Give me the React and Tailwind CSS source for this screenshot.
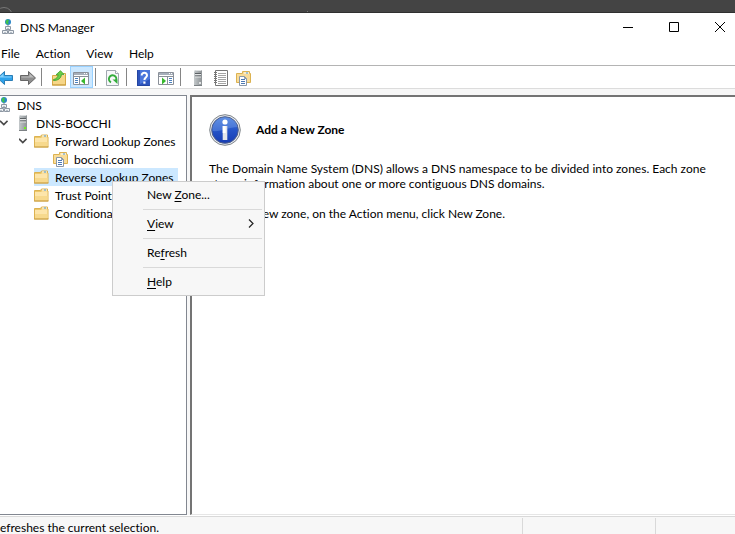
import React from "react";

function DnsIcon() {
  return (
    <svg width="16" height="16" viewBox="0 0 16 16" aria-hidden="true" className="shrink-0">
      <circle cx="8" cy="3" r="3" fill="#2a86c8" />
      <path d="M6 1.500 8 .3l1 1.500L8 3.200l.8 1.800L7.200 5.500 5.600 3.400z" fill="#3fc24a" />
      <path d="M8 6v2" stroke="#7b8794" />
      <g fill="#eef1f4" stroke="#8e98a4">
        <path d="M5.500 7.500h5v3h-5zM2.500 11.500h5v3h-5zM8.500 11.500h5v3h-5z" />
      </g>
      <path d="M7 9.500h2M4 13.500h2M10 13.500h2" stroke="#b4bdc6" />
    </svg>
  );
}

function ServerIcon({ power = false }) {
  return (
    <svg width="16" height="16" viewBox="0 0 16 16" aria-hidden="true" className="shrink-0">
      <defs>
        <linearGradient id="server-body" x1="0" y1="0" x2="1" y2="0">
          <stop offset="0" stopColor="#c3c8ca" />
          <stop offset="1" stopColor="#8d9295" />
        </linearGradient>
      </defs>
      <path d="M4 1.500 5 0h7v15l-1 1H4z" fill="url(#server-body)" />
      <path d="M4.500 1.500 5.500.5h6" fill="none" stroke="#dcdfe0" />
      <path d="M5 3h6v1H5zM5 5.500h6v1H5z" fill="#5c6164" />
      <path d="M5 4h6v1H5zM5 6.500h6v1H5z" fill="#e3e5e6" />
      <path d="M4 15.500h8" stroke="#7c8184" />
      <path d="M9 12h2v2H9z" fill={power ? "#6fee22" : "#e0e2e3"} />
    </svg>
  );
}

function FolderIcon() {
  return (
    <svg width="16" height="16" viewBox="0 0 16 16" aria-hidden="true" className="shrink-0">
      <path d="M.5 14V3.500H6.500l1-1.500h6v2h.5v10z" fill="#edc869" stroke="#dcb251" />
      <path d="M8 2.500h5v1H8z" fill="#fff" />
      <path d="M10 2.500h2v1h-2z" fill="#4d9ad5" />
      <path d="M1 5h6l1-.8h5.500V13H1z" fill="#fde5aa" />
      <path d="M1 9h12.500v4.500H1z" fill="#f7d98d" />
      <path d="M0 14h14.500" stroke="#cba14a" />
    </svg>
  );
}

function ZoneIcon() {
  return (
    <svg width="16" height="16" viewBox="0 0 16 16" aria-hidden="true" className="shrink-0">
      <path d="M.5 12.500v-9h6v-2h7v2h1v9z" fill="#f9dc98" stroke="#dcb251" />
      <path d="M8 2.500h5v1H8z" fill="#fff" />
      <path d="M10 2.500h2v1h-2z" fill="#4d9ad5" />
      <path d="M3.500 6.500h5l2 2v7h-7z" fill="#fff" stroke="#8a98a8" />
      <path d="M8.500 6.500v2h2" fill="none" stroke="#8a98a8" />
      <path d="M5 9.500h4M5 11.500h4M5 13.500h4" stroke="#4d79b4" />
    </svg>
  );
}

function ArrowIcon({ back = false }) {
  return (
    <svg width="18" height="16" viewBox="0 0 18 16" aria-hidden="true" className="shrink-0">
      {back ? (
        <>
          <path d="M1.500 8 8.500 1.500v4h8v5h-8v4z" fill="#2ea3ec" stroke="#2a7db5" />
          <path d="M3 7.500 7.500 3.500v3h8v1z" fill="#86d2fb" />
        </>
      ) : (
        <>
          <path d="M16.500 8 9.500 1.500v4h-8v5h8v4z" fill="#8f8f8f" stroke="#666" />
          <path d="M15 7.500 10.500 3.500v3h-8v1z" fill="#bcbcbc" />
        </>
      )}
    </svg>
  );
}

function UpFolderIcon() {
  return (
    <svg width="16" height="16" viewBox="0 0 16 16" aria-hidden="true">
      <path d="M1.500 15V5.500H8l1-2h5.500V15z" fill="#f6d688" stroke="#d6a945" />
      <path d="M10 4.500h4" stroke="#fff" />
      <path d="M1 15h14" stroke="#c89b3c" />
      <path d="M2.500 9.500C5.500 9 7 7 7.200 4.500L5 4.800 9.500.7 13 4.500l-2.500-.1C10 8.500 7 10.500 2.500 10.500z" fill="#69ce48" stroke="#3b9f2d" strokeWidth=".8" />
    </svg>
  );
}

function PaneIcon({ flip = false }) {
  return (
    <svg width="17" height="16" viewBox="0 0 17 16" aria-hidden="true">
      <path d="M.5 2.500h15v12H.5z" fill="#fff" stroke="#8a9099" />
      <path d="M1 3h14v2H1z" fill="#a7afba" />
      <path d="M1 6.500h14" stroke="#8a9099" />
      <path d="M11 3.500h1M13 3.500h1" stroke="#fff" />
      {flip ? (
        <>
          <path d="M9.500 7v8" stroke="#8a9099" />
          <path d="M11 8.500h3M11 10.500h3M11 12.500h3" stroke="#4a80bd" />
          <path d="m4 7.500 4 3.500-4 3.500z" fill="#38b82e" />
        </>
      ) : (
        <>
          <path d="M6.500 7v8" stroke="#8a9099" />
          <path d="M2 8.500h3M2 10.500h3M2 12.500h3" stroke="#4a80bd" />
          <path d="m12 7.500-4 3.500 4 3.500z" fill="#38b82e" />
        </>
      )}
    </svg>
  );
}

function RefreshIcon() {
  return (
    <svg width="16" height="16" viewBox="0 0 16 16" aria-hidden="true">
      <path d="M1.500.5h9l3 3v12h-12z" fill="#f7f8fa" stroke="#a1a8b0" />
      <path d="M10.500.5v3h3" fill="#fff" stroke="#a1a8b0" />
      <path d="M6 12.300A3.700 3.700 0 1 1 11 10.500" fill="none" stroke="#35ad3c" strokeWidth="2" />
      <path d="M7.500 9.500h5v4.500z" fill="#35ad3c" />
    </svg>
  );
}

function HelpIcon() {
  return (
    <svg width="16" height="16" viewBox="0 0 16 16" aria-hidden="true">
      <path d="M1 0h13v16H1z" fill="#2e55bd" />
      <path d="M4 0h10v9L4 14z" fill="#4b76db" />
      <path d="M1.500.5v15h12" fill="none" stroke="#2445a0" />
      <path d="M5.700 5.500C5.500 2 11 2 11 5.200 11 7.500 8.400 7.300 8.400 10" fill="none" stroke="#fff" strokeWidth="2" />
      <path d="M7.300 11.500h2.200v2.200H7.300z" fill="#fff" />
    </svg>
  );
}

function ListIcon() {
  return (
    <svg width="16" height="16" viewBox="0 0 16 16" aria-hidden="true">
      <path d="M2.500.5h12v15h-12z" fill="#fff" stroke="#777" />
      <path d="M5 3.500h8M5 5.500h8M5 7.500h8M5 9.500h8M5 11.500h8M5 13.500h8" stroke="#a4a4a4" />
      <path d="M1 2.500h3M1 4.500h3M1 6.500h3M1 8.500h3M1 10.500h3M1 12.500h3" stroke="#777" />
    </svg>
  );
}

function InfoIcon() {
  return (
    <svg width="32" height="32" viewBox="0 0 32 32" aria-hidden="true" className="shrink-0">
      <defs>
        <linearGradient id="info-fill" x1="0" y1="0" x2="0" y2="1">
          <stop offset="0" stopColor="#4f83df" />
          <stop offset=".5" stopColor="#2554c8" />
          <stop offset="1" stopColor="#173cb2" />
        </linearGradient>
      </defs>
      <circle cx="16" cy="16" r="15.300" fill="#e9ebed" stroke="#7d8389" />
      <circle cx="16" cy="16" r="13.300" fill="url(#info-fill)" stroke="#50618c" />
      <path d="M3.500 17C3 9 9 3.500 16 3.500S28 8 28.500 13C20 13 12 18 3.500 17z" fill="#84abee" opacity=".35" />
      <circle cx="16" cy="8" r="2.600" fill="#fff" />
      <path d="M13.700 12h4.600v14h-4.600z" fill="#e3e5ea" />
      <path d="M13.700 12h3v7h-3z" fill="#fff" />
    </svg>
  );
}

function Separator() {
  return (
    <div className="w-2 shrink-0 pl-0.5">
      <div className="h-[18px] w-px bg-[#858585]" />
    </div>
  );
}

function Tool({ label, active = false, children }) {
  return (
    <button
      type="button"
      aria-label={label}
      className={`flex h-[22px] w-[23px] shrink-0 items-center justify-center pt-0.5 ${active ? "border border-[#99d1ff] bg-[#cce8ff]" : ""}`}
    >
      {children}
    </button>
  );
}

function Chevron({ open = false }) {
  return (
    <span className="flex w-[15px] shrink-0 justify-start">
      {open && (
        <svg width="8" height="6" viewBox="0 0 8 6" aria-hidden="true">
          <path d="M0 .8 3.800 4.600 7.600.8" fill="none" stroke="#484848" strokeWidth="1.700" />
        </svg>
      )}
    </span>
  );
}

function TreeRow({ indent, open, icon, label, selected = false }) {
  return (
    <li role="treeitem" aria-selected={selected} className={`flex h-[18px] items-center ${indent}`}>
      <Chevron open={open} />
      <span className={`flex h-[18px] items-center gap-[5px] pr-1 whitespace-nowrap ${selected ? "bg-[#cce8ff]" : ""}`}>
        {icon}
        {label}
      </span>
    </li>
  );
}

function MenuItem({ before = "", accessKey, after, submenu = false }) {
  return (
    <button type="button" role="menuitem" className="flex h-[22px] w-full items-center justify-between pr-2 pb-0.5 pl-8 text-left">
      <span>
        {before}
        <span className="underline underline-offset-2">{accessKey}</span>
        {after}
      </span>
      {submenu && (
        <svg width="6" height="9" viewBox="0 0 6 9" aria-hidden="true">
          <path d="m1 .5 4 4-4 4" fill="none" stroke="#222" strokeWidth="1.200" />
        </svg>
      )}
    </button>
  );
}

function MenuDivider() {
  return (
    <div role="separator" className="h-[7px] pt-[3px] pl-7">
      <div className="h-px bg-[#d9d9d9]" />
    </div>
  );
}

export default function App() {
  return (
    <div className="flex min-h-screen w-full flex-col overflow-hidden bg-white font-['Lato','Open_Sans',sans-serif] text-[12px] leading-[15px] text-black [font-variant-ligatures:none]">
      <div className="h-[13px] shrink-0 overflow-hidden border-b border-[#303030] bg-[#444]">
        <svg width="735" height="12" viewBox="0 0 735 12" aria-hidden="true">
          <circle cx="4" cy="16" r="8.500" fill="none" stroke="#777" />
          <path d="M307.500 11v1" stroke="#777" />
        </svg>
      </div>

      <header className="flex h-[30px] shrink-0 items-center">
        <div className="flex flex-1 items-center gap-1 pb-0.5">
          <DnsIcon />
          <h1>DNS Manager</h1>
        </div>
        <div className="-mr-2 flex h-full">
          <button type="button" aria-label="Minimize" className="flex w-[46px] items-center justify-center">
            <svg width="10" height="10" viewBox="0 0 10 10"><path d="M0 4.500h10" stroke="#000" /></svg>
          </button>
          <button type="button" aria-label="Maximize" className="flex w-[46px] items-center justify-center pb-0.5">
            <svg width="10" height="10" viewBox="0 0 10 10"><path d="M.5.5h9v9h-9z" fill="none" stroke="#000" /></svg>
          </button>
          <button type="button" aria-label="Close" className="flex w-[46px] items-center justify-center pb-0.5">
            <svg width="10" height="10" viewBox="0 0 10 10"><path d="m0 0 10 10M10 0 0 10" stroke="#000" /></svg>
          </button>
        </div>
      </header>

      <nav className="flex h-[22px] shrink-0 items-center gap-4 pb-0.5 pl-px">
        <button type="button">File</button>
        <button type="button">Action</button>
        <button type="button">View</button>
        <button type="button">Help</button>
      </nav>

      <div role="toolbar" className="-ml-[7px] flex h-6 shrink-0 items-center border-y border-t-[#b4b4b4] border-b-[#dcdcdc]">
        <Tool label="Back"><ArrowIcon back /></Tool>
        <Tool label="Forward"><ArrowIcon /></Tool>
        <Separator />
        <Tool label="Up one level"><UpFolderIcon /></Tool>
        <Tool label="Show console tree" active><PaneIcon /></Tool>
        <Separator />
        <Tool label="Refresh"><RefreshIcon /></Tool>
        <Separator />
        <Tool label="Help"><HelpIcon /></Tool>
        <Tool label="Show action pane"><PaneIcon flip /></Tool>
        <Separator />
        <Tool label="New server"><ServerIcon /></Tool>
        <Tool label="Record list"><ListIcon /></Tool>
        <Tool label="New zone"><ZoneIcon /></Tool>
      </div>

      <div className="flex flex-1 gap-[3px] bg-[#f7f7f7] pt-[6px]">
        <aside className="relative w-[187px] shrink-0 border-y border-r border-[#828790] bg-white">
          <ul role="tree">
            <li role="treeitem" className="-ml-1 flex h-[18px] items-center gap-[5px]">
              <DnsIcon />
              DNS
            </li>
            <TreeRow indent="pl-0" open icon={<ServerIcon power />} label="DNS-BOCCHI" />
            <TreeRow indent="pl-[19px]" open icon={<FolderIcon />} label="Forward Lookup Zones" />
            <TreeRow indent="pl-[38px]" icon={<ZoneIcon />} label="bocchi.com" />
            <TreeRow indent="pl-[19px]" icon={<FolderIcon />} label="Reverse Lookup Zones" selected />
            <TreeRow indent="pl-[19px]" icon={<FolderIcon />} label="Trust Points" />
            <TreeRow indent="pl-[19px]" icon={<FolderIcon />} label="Conditional" />
          </ul>
          <div role="menu" className="absolute top-[85px] left-[112px] z-10 w-[153px] border border-[#ccc] bg-[#f7f7f7] p-0.5">
            <MenuItem before="New " accessKey="Z" after="one..." />
            <MenuDivider />
            <MenuItem accessKey="V" after="iew" submenu />
            <MenuDivider />
            <MenuItem before="Re" accessKey="f" after="resh" />
            <MenuDivider />
            <MenuItem accessKey="H" after="elp" />
          </div>
        </aside>

        <main className="flex-1 border-t-2 border-b border-l-2 border-t-[#747474] border-b-[#e6e6e6] border-l-[#747474] bg-white py-[17px] pr-4 pl-[17px]">
          <div className="flex items-center gap-[15px]">
            <InfoIcon />
            <h2 className="pb-0.5 font-bold">Add a New Zone</h2>
          </div>
          <p className="mt-[15px]">
            The Domain Name System (DNS) allows a DNS namespace to be divided into zones. Each zone
            <br />
            stores information about one or more contiguous DNS domains.
          </p>
          <p className="mt-[15px]">To add a new zone, on the Action menu, click New Zone.</p>
        </main>
      </div>

      <footer className="mt-px flex h-[18px] shrink-0 border-t border-[#d9d9d9] bg-[#f7f7f7]">
        <div className="flex-1 pt-[5px] leading-3">efreshes the current selection.</div>
        <div className="mt-px w-[133px] border-l border-[#d9d9d9]" />
        <div className="mt-px w-20 border-l border-[#d9d9d9]" />
      </footer>
    </div>
  );
}
